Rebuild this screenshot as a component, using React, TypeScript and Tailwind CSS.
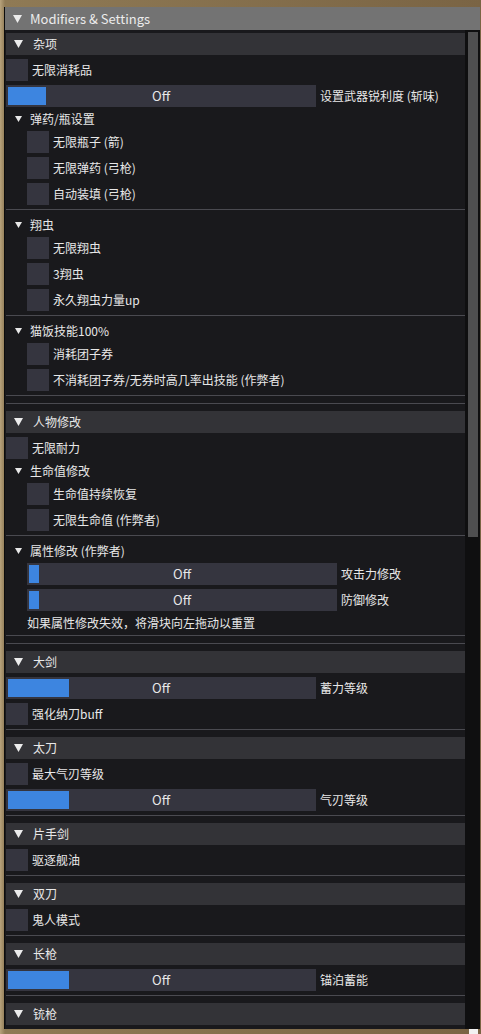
import React from "react";

const FONT = { fontFamily: '"Noto Sans CJK SC", "Noto Sans", sans-serif' };

function Arrow({ size = "md" }: { size?: "sm" | "md" }) {
  if (size === "sm") {
    return (
      <svg width="7" height="6" viewBox="0 0 7 6" className="shrink-0">
        <polygon points="0,0 7,0 3.5,6" fill="#e8e8e8" />
      </svg>
    );
  }
  return (
    <svg width="9" height="8" viewBox="0 0 9 8" className="shrink-0">
      <polygon points="0,0 9,0 4.5,8" fill="#ececec" />
    </svg>
  );
}

function Header({ title }: { title: string }) {
  return (
    <div className="h-[22px] bg-[#333337] flex items-center pl-[8px]">
      <Arrow />
      <span className="ml-[10px] text-[12px] text-[#e8e8e8]">{title}</span>
    </div>
  );
}

function Tree({ title }: { title: string }) {
  return (
    <div className="h-[16px] flex items-center pl-[9px]">
      <Arrow size="sm" />
      <span className="ml-[8px] text-[12px] text-[#e8e8e8]">{title}</span>
    </div>
  );
}

function Check({ label, indent }: { label: string; indent?: boolean }) {
  return (
    <div className={`h-[22px] flex items-center ${indent ? "pl-[21px]" : ""}`}>
      <div className="w-[22px] h-[22px] bg-[#35353f] shrink-0" />
      <span className="ml-[4px] text-[12px] text-[#e8e8e8] whitespace-nowrap">
        {label}
      </span>
    </div>
  );
}

function Slider({
  label,
  grab,
  indent,
}: {
  label: string;
  grab: number;
  indent?: boolean;
}) {
  return (
    <div className={`h-[22px] flex items-center ${indent ? "pl-[21px]" : ""}`}>
      <div className="relative w-[310px] h-[22px] bg-[#35353f] shrink-0 flex items-center justify-center">
        <div
          className="absolute left-[2px] top-[2px] bottom-[2px] bg-[#3d85e0]"
          style={{ width: grab }}
        />
        <span className="relative text-[13px] text-[#e8e8e8]">Off</span>
      </div>
      <span className="ml-[4px] text-[12px] text-[#e8e8e8] whitespace-nowrap">
        {label}
      </span>
    </div>
  );
}

function Sep() {
  return <div className="h-[4px] border-t border-[#4a4a50] shrink-0" />;
}

export default function App() {
  return (
    <div
      className="relative w-[481px] h-[1034px] overflow-hidden bg-[linear-gradient(90deg,#b8a37c_0px,#8f7a55_5px,#7a6444_100%)]"
      style={FONT}
    >
      <div className="ml-[4px] mt-[7px] w-[476px] h-[1022px] bg-[#19191c] border-l border-[#0c0c0c] flex flex-col overflow-hidden">
        <div className="h-[23px] shrink-0 bg-[#737373] flex items-center pl-[8px]">
          <Arrow />
          <span className="ml-[8px] text-[13px] text-[#ececec]">
            Modifiers &amp; Settings
          </span>
        </div>
        <div className="flex flex-1 min-h-0">
          <div className="w-[460px] pl-[1px] pt-[3px] flex flex-col gap-1 overflow-hidden">
            <Header title="杂项" />
            <Check label="无限消耗品" />
            <Slider label="设置武器锐利度 (斩味)" grab={38} />
            <Tree title="弹药/瓶设置" />
            <Check indent label="无限瓶子 (箭)" />
            <Check indent label="无限弹药 (弓枪)" />
            <Check indent label="自动装填 (弓枪)" />
            <Sep />
            <Tree title="翔虫" />
            <Check indent label="无限翔虫" />
            <Check indent label="3翔虫" />
            <Check indent label="永久翔虫力量up" />
            <Sep />
            <Tree title="猫饭技能100%" />
            <Check indent label="消耗团子券" />
            <Check indent label="不消耗团子券/无券时高几率出技能 (作弊者)" />
            <Sep />
            <Sep />
            <Header title="人物修改" />
            <Check label="无限耐力" />
            <Tree title="生命值修改" />
            <Check indent label="生命值持续恢复" />
            <Check indent label="无限生命值 (作弊者)" />
            <Sep />
            <Tree title="属性修改 (作弊者)" />
            <Slider indent label="攻击力修改" grab={10} />
            <Slider indent label="防御修改" grab={10} />
            <div className="h-[16px] flex items-center pl-[21px] text-[12px] text-[#e8e8e8]">
              如果属性修改失效，将滑块向左拖动以重置
            </div>
            <Sep />
            <Sep />
            <Header title="大剑" />
            <Slider label="蓄力等级" grab={61} />
            <Check label="强化纳刀buff" />
            <Sep />
            <Header title="太刀" />
            <Check label="最大气刃等级" />
            <Slider label="气刃等级" grab={61} />
            <Sep />
            <Header title="片手剑" />
            <Check label="驱逐舰油" />
            <Sep />
            <Header title="双刀" />
            <Check label="鬼人模式" />
            <Sep />
            <Header title="长枪" />
            <Slider label="锚泊蓄能" grab={61} />
            <Sep />
            <Header title="铳枪" />
          </div>
          <div className="w-[15px] bg-[#0f0f10] pt-[2px] pl-[3px] pr-[2px]">
            <div className="h-[505px] bg-[#4f4f50]" />
          </div>
        </div>
      </div>
      {/* resize grip corner */}
      <div className="absolute left-[469px] top-[1029px] w-[9px] h-[5px] bg-[#f2f2f2]" />
    </div>
  );
}
